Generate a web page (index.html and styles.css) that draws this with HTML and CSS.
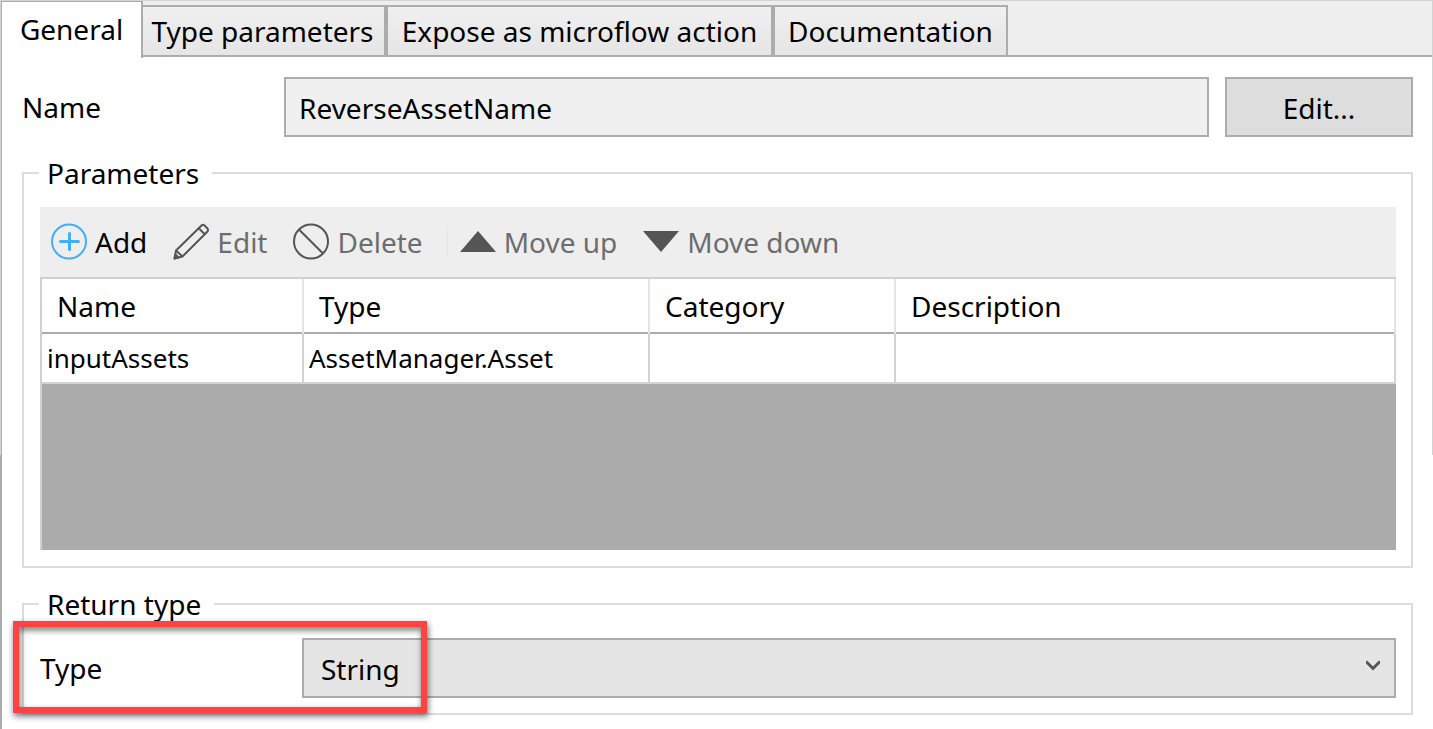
FILE: index.html
```html
<!DOCTYPE html>
<html lang="en">
<head>
<meta charset="utf-8">
<title>Java action</title>
<link rel="stylesheet" href="styles.css">
</head>
<body>
<div class="window">
  <nav class="tabs" role="tablist">
    <button class="tab tab-active" role="tab" aria-selected="true">General</button>
    <button class="tab tab-type" role="tab">Type parameters</button>
    <button class="tab tab-expose" role="tab">Expose as microflow action</button>
    <button class="tab tab-docs" role="tab">Documentation</button>
  </nav>
  <main class="panel">
    <div class="name-row">
      <label class="name-label" for="name">Name</label>
      <input class="name-input" id="name" type="text" value="ReverseAssetName" readonly>
      <button class="edit-button">Edit...</button>
    </div>

    <fieldset class="group">
      <legend class="group-title">Parameters</legend>
      <div class="toolbar">
        <button class="tool tool-add">
          <svg class="icon" viewBox="0 0 36 36" fill="none" stroke="#42aef8" stroke-width="2"><circle cx="18" cy="17.500" r="17"/><path stroke-width="3" stroke-linecap="round" d="M18.500 9.500v16M9.500 17.500h18"/></svg>
          Add
        </button>
        <button class="tool" disabled>
          <svg class="icon" viewBox="0 0 36 36" fill="none" stroke="#555" stroke-width="2" stroke-linejoin="round"><path d="M1.500 34.500l1.500-8L28.500 1.500q1.500-1.500 3 0l3 3q1 1.500 0 3L9.500 32.500zM3 26.500l6.500 6M26 4.500l6 6"/><path fill="#555" d="M1.500 34.500l1-4 3 3z"/></svg>
          Edit
        </button>
        <button class="tool" disabled>
          <svg class="icon" viewBox="0 0 36 36" fill="none" stroke="#555" stroke-width="2"><circle cx="18" cy="17.500" r="17"/><path d="M6 5.500l24 24"/></svg>
          Delete
        </button>
        <span class="separator"></span>
        <button class="tool" disabled>
          <svg class="icon" viewBox="0 0 36 36" fill="#555"><path d="M0 28L18 7l18 21z"/></svg>
          Move up
        </button>
        <button class="tool" disabled>
          <svg class="icon" viewBox="0 0 36 36" fill="#555"><path d="M0 7h36L18 28z"/></svg>
          Move down
        </button>
      </div>
      <div class="grid">
        <table class="table">
          <colgroup><col class="col-name"><col class="col-type"><col class="col-category"><col></colgroup>
          <thead>
            <tr><th>Name</th><th>Type</th><th>Category</th><th>Description</th></tr>
          </thead>
          <tbody>
            <tr><td>inputAssets</td><td>AssetManager.Asset</td><td></td><td></td></tr>
          </tbody>
        </table>
      </div>
    </fieldset>

    <fieldset class="group group-return">
      <legend class="group-title">Return type</legend>
      <div class="return-row">
        <label class="return-label" for="return-type">Type</label>
        <div class="select-box">
          <select class="select" id="return-type"><option>String</option></select>
          <svg class="chevron" viewBox="0 0 14 11" fill="none" stroke="#555" stroke-width="3"><path d="M0 1.500L7 8.500l7-7"/></svg>
        </div>
        <div class="highlight"></div>
      </div>
    </fieldset>
  </main>
</div>
</body>
</html>
```
FILE: styles.css
```css
* {
  box-sizing: border-box;
}

body {
  margin: 0;
  background: #fff;
  color: #000;
  font: 28px/36px "Noto Sans", "Open Sans", sans-serif;
}

button,
input,
select {
  font: inherit;
  color: inherit;
  margin: 0;
  border-radius: 0;
}

/* The frame's light outer line ends partway down the left and right edges. */
.window {
  min-height: 100vh;
  padding: 1px 1px 0 1px;
  background:
    linear-gradient(#d3d3d3, #d3d3d3) 0 0 / 100% 1px no-repeat,
    linear-gradient(#d3d3d3, #d3d3d3) 100% 0 / 1px 455px no-repeat,
    linear-gradient(#d3d3d3, #d3d3d3) 0 0 / 1px 455px no-repeat,
    linear-gradient(#acacac, #acacac) 0 0 / 2px 100% no-repeat,
    #fff;
}

.tabs {
  display: flex;
  align-items: flex-start;
  height: 56px;
  background: linear-gradient(#acacac, #acacac) 0 100% / 100% 2px no-repeat, #eee;
}

.tab {
  height: 52px;
  margin-top: 4px;
  padding: 0;
  border: 2px solid #acacac;
  background: linear-gradient(#f0f0f0, #e5e5e5);
  white-space: nowrap;
}

.tab-active {
  width: 142px;
  height: 57px;
  margin-top: 0;
  padding: 0 0 2px;
  border-width: 1px 2px 0 1px;
  background: #fff;
}

.tab-type {
  width: 243px;
  padding-right: 2px;
  border-left: 0;
}

.tab-expose {
  width: 387px;
}

.tab-docs {
  width: 235px;
}

.panel {
  display: flex;
  flex-direction: column;
  gap: 18px;
  padding: 20px 19px 13px 21px;
}

.name-row {
  display: flex;
  align-items: center;
  height: 60px;
}

.name-label,
.return-label {
  flex: 0 0 262px;
}

.name-input {
  flex: 1;
  min-width: 0;
  height: 60px;
  padding: 2px 13px 0;
  border: 2px solid #abadb3;
  background: #f0f0f0;
}

.edit-button {
  width: 188px;
  height: 60px;
  margin-left: 16px;
  padding: 2px 0 0;
  border: 2px solid #acacac;
  background: #ddd;
}

.group {
  min-width: 0;
  margin: 0;
  padding: 16px 15px 16px 16px;
  border: 2px solid #dcdcdc;
}

.group-return {
  padding-bottom: 15px;
}

.group-title {
  margin-left: -1px;
  padding: 0 13px 0 8px;
}

.toolbar {
  display: flex;
  align-items: center;
  gap: 26px;
  height: 70px;
  padding: 0 11px;
  background: #eee;
}

.tool {
  display: flex;
  align-items: center;
  gap: 8px;
  padding: 0;
  border: 0;
  background: none;
  color: #6d6d6d;
  white-space: nowrap;
}

.tool-add {
  color: #000;
}

.icon {
  width: 36px;
  height: 36px;
  overflow: visible;
}

.separator {
  width: 1px;
  height: 30px;
  margin: 0 -14px 0 -2px;
  background: #e6e6e6;
}

.grid {
  min-height: 273px;
  border-top: 2px solid #d0d0d0;
  border-left: 2px solid #d0d0d0;
  background: #ababab;
}

.table {
  width: 100%;
  border-spacing: 0;
  table-layout: fixed;
  background: #fff;
}

.col-name {
  width: 262px;
}

.col-type {
  width: 346px;
}

.col-category {
  width: 246px;
}

.table th {
  height: 55px;
  padding: 0 15px 2px;
  border-right: 2px solid #e3e3e3;
  background: linear-gradient(#acacac, #acacac) 0 100% / 100% 2px no-repeat;
  background-clip: padding-box;
  font-weight: 400;
  text-align: left;
}

.table td {
  height: 50px;
  padding: 0 5px;
  border-right: 2px solid #d3d3d3;
  border-bottom: 2px solid #d3d3d3;
  font-size: 26px;
}

.return-row {
  position: relative;
  display: flex;
  align-items: center;
}

.select-box {
  position: relative;
  flex: 1;
}

.select {
  display: block;
  width: 100%;
  height: 60px;
  padding: 2px 17px 0;
  appearance: none;
  border: 2px solid #acacac;
  background: #e5e5e5;
}

.chevron {
  position: absolute;
  top: 22px;
  right: 16px;
  width: 14px;
  height: 11px;
  pointer-events: none;
}

/* Callout drawn over the label and the start of the drop-down. */
.highlight {
  position: absolute;
  top: -17px;
  left: -27px;
  width: 414px;
  height: 92px;
  border: 6px solid #ff4343;
  filter: drop-shadow(1px 3px 3px rgba(0, 0, 0, 0.6));
  pointer-events: none;
}
```
